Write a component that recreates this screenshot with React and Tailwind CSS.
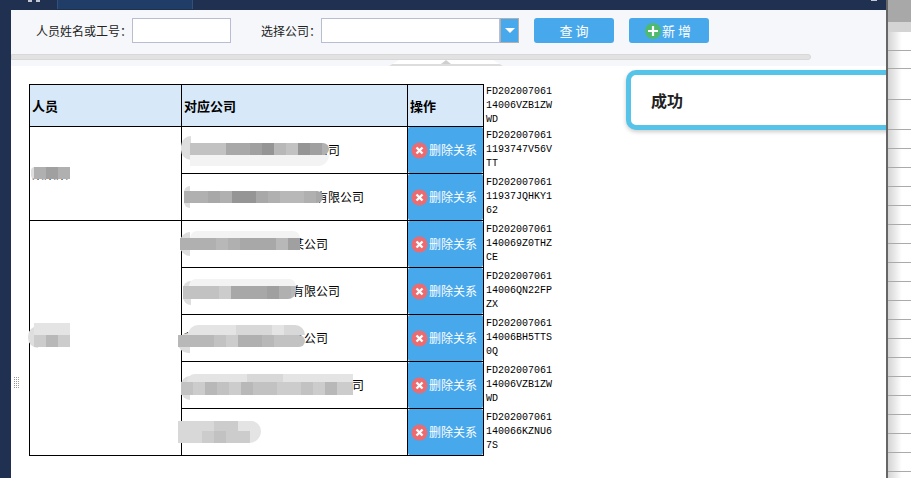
const cjk = "font-['Noto_Sans_CJK_SC','Liberation_Sans',sans-serif]"

const greys = {
  0: "bg-[#959595]",
  1: "bg-[#a0a0a0]",
  2: "bg-[#a8a8a8]",
  3: "bg-[#b0b0b0]",
  4: "bg-[#b8b8b8]",
  5: "bg-[#c2c2c2]",
  6: "bg-[#cccccc]",
  7: "bg-[#d8d8d8]",
  8: "bg-[#e4e4e4]",
  9: "bg-[#f3f3f3]",
}

// pixelated patches that hide the names, coordinates are relative to the page
const patches = [
  { pos: "left-[31px] top-[167px]", cap: "h-[12px] w-[4px]", rows: [{ cls: "ml-[3px] h-[12px] w-[36px]", cells: "313" }] },
  {
    pos: "left-[28px] top-[323px]",
    cap: "top-[3px] h-[22px] w-[10px]",
    rows: [
      { cls: "ml-[6px] h-[12px] w-[36px]", cells: "888" },
      { cls: "ml-[6px] h-[12px] w-[36px]", cells: "646" },
    ],
  },
  {
    pos: "left-[181px] top-[143px]",
    cap: "top-[-7px] h-[24px] w-[10px]",
    rows: [
      { cls: "ml-[9px] h-[12px] w-[139px] rounded-r-lg", cells: "555221045013" },
      { cls: "ml-[9px] h-[11px] w-[139px] rounded-br-xl", cells: "999999999999" },
    ],
  },
  {
    pos: "left-[184px] top-[191px]",
    cap: "top-[-5px] h-[22px] w-[6px]",
    rows: [{ cls: "h-[12px] w-[139px] rounded-r-md", cells: "332300234432" }],
  },
  {
    pos: "left-[180px] top-[231px]",
    cap: "top-[1px] h-[24px] w-[10px]",
    rows: [
      { cls: "ml-[10px] h-[7px] w-[110px] rounded-t-lg", cells: "9999999999" },
      { cls: "h-[12px] w-[120px]", cells: "3334322241" },
    ],
  },
  {
    pos: "left-[183px] top-[279px]",
    cap: "top-[2px] h-[24px] w-[8px]",
    rows: [
      { cls: "ml-[6px] h-[7px] w-[107px] rounded-t-lg", cells: "9999999999" },
      { cls: "h-[13px] w-[113px] rounded-br-lg", cells: "5556222134" },
    ],
  },
  {
    pos: "left-[178px] top-[325px]",
    cap: "top-[8px] h-[20px] w-[12px]",
    rows: [
      { cls: "ml-[10px] h-[10px] w-[117px] rounded-t-xl", cells: "8888777877" },
      { cls: "h-[12px] w-[127px] rounded-r-md", cells: "4445633455" },
    ],
  },
  {
    pos: "left-[181px] top-[374px]",
    cap: "top-[2px] h-[24px] w-[9px]",
    rows: [
      { cls: "ml-[6px] h-[8px] w-[166px] rounded-tl-lg", cells: "88888777888888" },
      { cls: "h-[13px] w-[172px]", cells: "56456455665646" },
    ],
  },
  {
    pos: "left-[178px] top-[421px]",
    rows: [
      { cls: "h-[10px] w-[83px] rounded-tr-xl", cells: "7776688" },
      { cls: "h-[12px] w-[83px] rounded-br-xl", cells: "7765668" },
    ],
  },
]

const groups = [
  {
    person: "某某某",
    items: [
      { company: "某某某某某某某某某某某公司", code: "FD2020070611193747V56VTT" },
      { company: "某某某某某某某某某某某有限公司", code: "FD20200706111937JQHKY162" },
    ],
  },
  {
    person: "某某某",
    items: [
      { company: "某某某某某某某某某某公司", code: "FD202007061140069Z0THZCE" },
      { company: "某某某某某某某某某有限公司", code: "FD20200706114006QN22FPZX" },
      { company: "某某某某某某某某某某公司", code: "FD20200706114006BH5TTS0Q" },
      { company: "某某某某某某某某某某某某某公司", code: "FD20200706114006VZB1ZWWD" },
      { company: "某某某某某某", code: "FD202007061140066KZNU67S" },
    ],
  },
]

function Patch({ pos, cap, rows }) {
  return (
    <div className={`absolute flex flex-col ${pos}`}>
      {cap && <div className={`absolute left-0 rounded-l-full bg-[#dedede] ${cap}`} />}
      {rows.map((row, i) => (
        <div key={i} className={`relative flex overflow-hidden ${row.cls}`}>
          {row.cells.split("").map((c, j) => (
            <div key={j} className={`h-full w-[12px] shrink-0 ${greys[c]}`} />
          ))}
          <div className={`h-full flex-1 ${greys[row.cells[row.cells.length - 1]]}`} />
        </div>
      ))}
    </div>
  )
}

function CodeCell({ code }) {
  return (
    <td className="w-[70px] p-0 pl-[2px] align-middle font-['Liberation_Mono',monospace] text-[10px] leading-[14px] break-all text-black">
      {code}
    </td>
  )
}

function DeleteButton() {
  return (
    <button className="flex h-[46px] w-full items-center rounded-[2px] bg-[#47a8ec] pl-[3px] text-[12px] whitespace-nowrap text-white">
      <svg width="17" height="17" viewBox="0 0 17 17" className="mr-[1px] shrink-0">
        <circle cx="8.5" cy="8.5" r="8" fill="#ec6b70" />
        <path d="M5.5 5.5l6 6M11.5 5.5l-6 6" stroke="#fff" strokeWidth="2.4" />
      </svg>
      删除关系
    </button>
  )
}

export default function App() {
  return (
    <div className={`flex h-[478px] w-[911px] overflow-hidden bg-white ${cjk}`}>
      <div className="w-[11px] shrink-0 bg-[#1f3050]" />

      <div className="relative flex w-[875px] shrink-0 flex-col overflow-hidden">
        {/* top bar */}
        <div className="flex h-[10px] shrink-0 bg-[#1f3050]">
          <div className="ml-[17px] flex h-[2px] w-[12px] gap-[4px]">
            <div className="h-full w-[4px] bg-[#c4c8d0]" />
            <div className="h-full w-[4px] bg-[#c4c8d0]" />
          </div>
          <div className="ml-[17px] h-[9px] w-[136px] border-x border-[#34507a] bg-[#1f3d66]" />
          <div className="ml-[678px] h-[1px] w-[6px] bg-[#c4c8d0]" />
        </div>

        {/* search panel */}
        <div className="relative h-[56px] shrink-0 bg-[#f5f7fa] pt-[8px]">
          <div className="flex h-[25px] items-center pl-[25px] text-[12px] text-[#222]">
            <label className="w-[96px]">人员姓名或工号：</label>
            <input className="h-[25px] w-[99px] border border-[#b9bdd2] bg-white" />
            <label className="ml-[30px] w-[60px]">选择公司：</label>
            <div className="flex h-[25px] w-[198px]">
              <input className="h-full w-[179px] border border-[#b9bdd2] bg-white" />
              <div className="flex w-[19px] items-center justify-center border border-[#b0b0b0] bg-[#47a8ec]">
                <svg width="10" height="5" viewBox="0 0 10 5">
                  <path d="M0 0h10L5 5z" fill="#fff" />
                </svg>
              </div>
            </div>
            <button className="ml-[15px] h-[25px] w-[80px] rounded-[3px] bg-[#47a8ec] text-[13px] text-white">
              查 询
            </button>
            <button className="ml-[15px] flex h-[25px] w-[80px] items-center rounded-[3px] bg-[#47a8ec] pl-[16px] text-[13px] text-white">
              <svg width="16" height="16" viewBox="0 0 16 16" className="mr-[1px] shrink-0">
                <circle cx="8" cy="8" r="8" fill="#4fba6f" />
                <path d="M8 3v10M3 8h10" stroke="#fff" strokeWidth="2.2" />
              </svg>
              新 增
            </button>
          </div>
          <div className="mt-[11px] h-[6px] w-[800px] rounded-r-[3px] border border-[#d8d8d8] bg-[#e2e2e2]" />
          <div className="absolute top-[50px] left-[378px] flex h-[6px] w-[114px] justify-center border-b-2 border-[#dddddd] bg-white [clip-path:polygon(10px_0,104px_0,114px_100%,0_100%)]">
            <svg width="10" height="4" viewBox="0 0 10 4">
              <path d="M5 0l5 4H0z" fill="#cfcfcf" />
            </svg>
          </div>
        </div>

        {/* result table */}
        <div className="pt-[18px] pl-[18px]">
          <table className="table-fixed border-collapse text-[12px] text-black">
            <colgroup>
              <col className="w-[152px]" />
              <col className="w-[226px]" />
              <col className="w-[76px]" />
              <col className="w-[70px]" />
            </colgroup>
            <tbody>
              <tr className="h-[42px]">
                <th className="border border-black bg-[#d7e9f8] pl-[2px] text-left text-[13px] font-bold">人员</th>
                <th className="border border-black bg-[#d7e9f8] pl-[2px] text-left text-[13px] font-bold">对应公司</th>
                <th className="border border-black bg-[#d7e9f8] pl-[2px] text-left text-[13px] font-bold">操作</th>
                <CodeCell code="FD20200706114006VZB1ZWWD" />
              </tr>
              {groups.map((group, g) =>
                group.items.map((item, i) => (
                  <tr key={`${g}-${i}`} className="h-[47px]">
                    {i === 0 && (
                      <td rowSpan={group.items.length} className="border border-black pl-[2px] align-middle">
                        {group.person}
                      </td>
                    )}
                    <td className="border border-black pl-[2px] whitespace-nowrap">{item.company}</td>
                    <td className="border border-black p-0">
                      <DeleteButton />
                    </td>
                    <CodeCell code={item.code} />
                  </tr>
                )),
              )}
            </tbody>
          </table>
        </div>

        {/* toast */}
        <div className="absolute top-[70px] left-[615px] flex h-[60px] w-[280px] items-center rounded-l-[10px] border-[5px] border-[#55c4e8] bg-white pl-[20px] text-[16px] font-bold text-[#222] shadow-[0_2px_4px_rgba(0,0,0,0.2)]">
          成功
        </div>

        {/* splitter grip */}
        <svg width="5" height="12" viewBox="0 0 5 12" className="absolute top-[377px] left-[3px]">
          <path d="M0.5 0v12" stroke="#9a8f8f" strokeDasharray="1 1" />
          <path d="M2.5 0v12" stroke="#8f97b0" strokeDasharray="1 1" />
          <path d="M4.5 0v12" stroke="#b09a80" strokeDasharray="1 1" />
        </svg>
      </div>

      {/* the sheet behind the dialog */}
      <div className="flex flex-1 flex-col border-l-2 border-[#666] bg-gradient-to-r from-[#d4d4d4] to-white to-60%">
        <div className="h-[22px] shrink-0 bg-[#a8a8a8]" />
        <div className="h-[10px] shrink-0 bg-[#d4d4d4]" />
        <div className="h-[19px] shrink-0 border-b border-[#aaa]" />
        <div className="h-[18px] shrink-0 border-b border-[#aaa]" />
        <div className="h-[31px] shrink-0 border-b border-[#aaa]" />
        <div className="h-[30px] shrink-0 border-b border-[#aaa]" />
        {Array.from({ length: 18 }).map((_, i) => (
          <div key={i} className="h-[19px] shrink-0 border-b border-[#aaa]" />
        ))}
      </div>

      {patches.map((patch, i) => (
        <Patch key={i} {...patch} />
      ))}
    </div>
  )
}
